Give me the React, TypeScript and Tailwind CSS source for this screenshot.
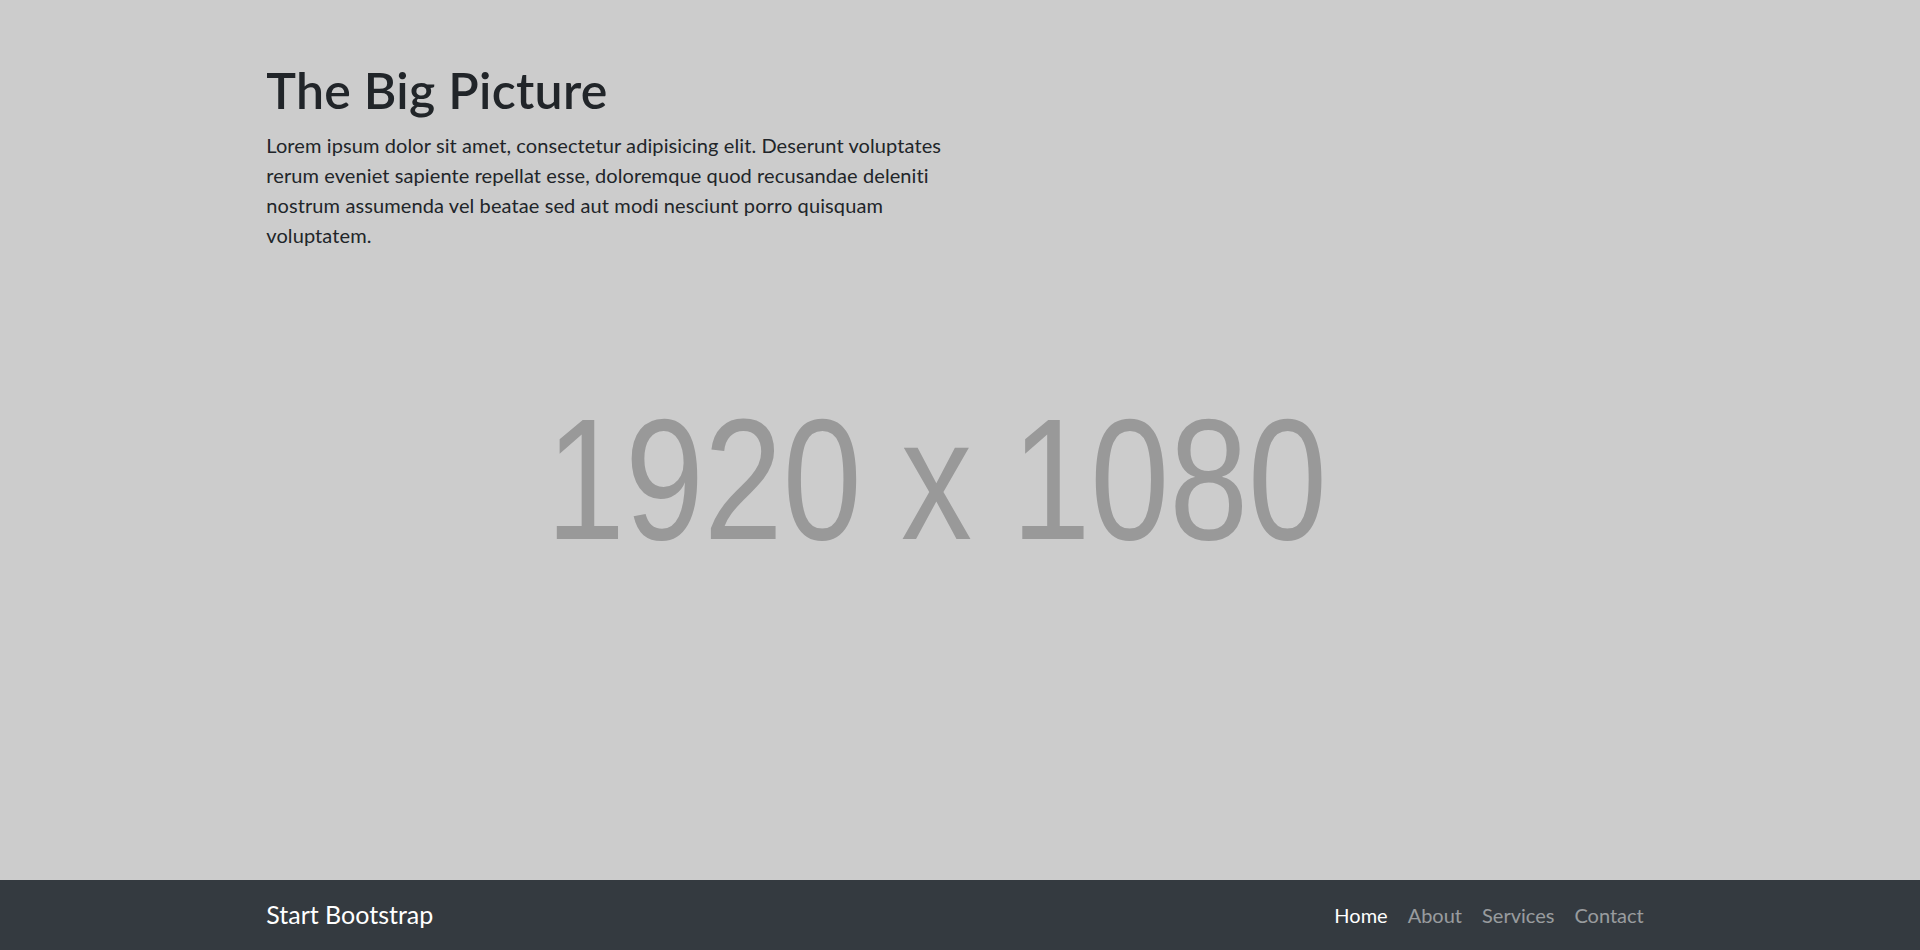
import React from "react";

const font = { fontFamily: "Lato, 'Noto Sans', 'Open Sans', sans-serif" };

function Placeholder() {
  return (
    <svg
      className="absolute inset-0 w-full h-full"
      width="1920"
      height="950"
      viewBox="0 0 1920 950"
      preserveAspectRatio="none"
    >
      <rect x="0" y="0" width="1920" height="950" fill="#cccccc" />
      <text
        x="546"
        y="539"
        fill="#999999"
        fontSize="172"
        fontFamily="'Liberation Sans', Arial, sans-serif"
        textLength="781"
        lengthAdjust="spacingAndGlyphs"
      >
        1920 x 1080
      </text>
    </svg>
  );
}

export default function App() {
  return (
    <div className="relative w-full h-[950px] overflow-hidden bg-[#cccccc] flex flex-col" style={font}>
      <Placeholder />
      <section className="relative flex-1">
        <div className="w-[1425px] mx-auto px-[18.75px]">
          <div className="w-[675px]">
            <h1 className="mt-[60px] mb-[10px] text-[50px] leading-[60px] font-semibold tracking-[0.3px] text-[#212529]">
              The Big Picture
            </h1>
            <p className="text-[20px] leading-[30px] tracking-[0.1px] text-[#212529] mb-[20px]">
              Lorem ipsum dolor sit amet, consectetur adipisicing elit. Deserunt voluptates rerum eveniet sapiente
              repellat esse, doloremque quod recusandae deleniti nostrum assumenda vel beatae sed aut modi nesciunt
              porro quisquam voluptatem.
            </p>
          </div>
        </div>
      </section>
      <nav className="relative h-[70px] bg-[#343a40] py-[10px]">
        <div className="w-[1425px] mx-auto px-[18.75px] h-[50px] flex items-center justify-between">
          <a className="text-[25px] leading-[37.5px] py-[6.25px] text-white whitespace-nowrap">Start Bootstrap</a>
          <ul className="flex items-center">
            <li>
              <a className="block px-[10px] py-[10px] text-[20px] leading-[30px] text-white">Home</a>
            </li>
            <li>
              <a className="block px-[10px] py-[10px] text-[20px] leading-[30px] text-[rgba(255,255,255,0.5)]">About</a>
            </li>
            <li>
              <a className="block px-[10px] py-[10px] text-[20px] leading-[30px] text-[rgba(255,255,255,0.5)]">Services</a>
            </li>
            <li>
              <a className="block px-[10px] py-[10px] text-[20px] leading-[30px] text-[rgba(255,255,255,0.5)]">Contact</a>
            </li>
          </ul>
        </div>
      </nav>
    </div>
  );
}
